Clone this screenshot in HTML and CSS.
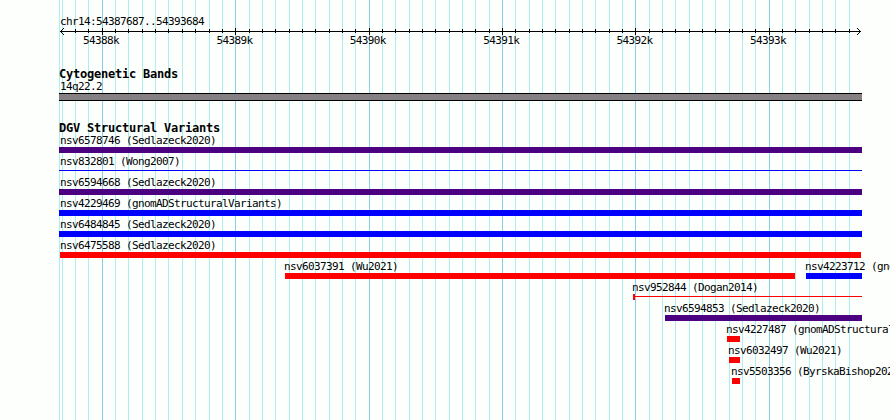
FILE: index.html
```html
<!DOCTYPE html>
<html lang="en">
<head>
    <meta charset="UTF-8">
    <meta name="viewport" content="width=device-width, initial-scale=1.0">
    <title>chr14:54387687..54393684</title>
    <link rel="stylesheet" href="styles.css">
</head>
<body>
    <div class="browser">
        <svg class="grid" id="grid" width="890" height="420" shape-rendering="crispEdges"></svg>

        <div class="ruler">
            <div class="region">chr14:54387687..54393684</div>
            <svg class="axis" id="axis" width="803" height="7" shape-rendering="crispEdges">
                <path d="M1 3h801v1h-801z"/>
                <path d="M2 2h1v3h-1z M3 1h1v1h-1z M3 5h1v1h-1z M4 0h1v1h-1z M4 6h1v1h-1z"/>
                <path d="M800 2h1v3h-1z M799 1h1v1h-1z M799 5h1v1h-1z M798 0h1v1h-1z M798 6h1v1h-1z"/>
            </svg>
            <div class="scale">
                <span>54388k</span>
                <span>54389k</span>
                <span>54390k</span>
                <span>54391k</span>
                <span>54392k</span>
                <span>54393k</span>
            </div>
        </div>

        <div class="track cytobands">
            <h2>Cytogenetic Bands</h2>
            <div class="label">14q22.2</div>
            <div class="band"></div>
        </div>

        <div class="track variants">
            <h2>DGV Structural Variants</h2>
            <div id="rows"></div>
        </div>
    </div>

    <script>
        const svgNS = 'http://www.w3.org/2000/svg';
        const trackLeft = 59;

        function addRect(parent, x, y, width, height, cls) {
            const rect = document.createElementNS(svgNS, 'rect');
            rect.setAttribute('x', x);
            rect.setAttribute('y', y);
            rect.setAttribute('width', width);
            rect.setAttribute('height', height);
            rect.setAttribute('class', cls);
            parent.appendChild(rect);
        }

        // one line every 100 bp, a darker one every 1000 bp
        const grid = document.getElementById('grid');
        const axis = document.getElementById('axis');
        addRect(grid, trackLeft, 0, 1, 420, 'minor');
        for (let k = -3; k <= 56; k++) {
            const x = Math.floor(102.3 + k * 13.338);
            const major = k % 10 === 0;
            addRect(grid, x, 0, 1, 420, major ? 'major' : 'minor');
            // the first line falls on the arrow head
            if (k > -3) addRect(axis, x - trackLeft, major ? 0 : 1, 1, major ? 7 : 4, 'tick');
        }

        // start and end are pixels from the left of the track
        const rows = [
            [{ name: 'nsv6578746 (Sedlazeck2020)', start: 0, end: 803, type: 'complex' }],
            [{ name: 'nsv832801 (Wong2007)', start: 0, end: 803, type: 'thin-gain' }],
            [{ name: 'nsv6594668 (Sedlazeck2020)', start: 0, end: 803, type: 'complex' }],
            [{ name: 'nsv4229469 (gnomADStructuralVariants)', start: 0, end: 803, type: 'gain' }],
            [{ name: 'nsv6484845 (Sedlazeck2020)', start: 0, end: 803, type: 'gain' }],
            [{ name: 'nsv6475588 (Sedlazeck2020)', start: 1, end: 802, type: 'loss' }],
            [{ name: 'nsv6037391 (Wu2021)', start: 226, end: 736, type: 'loss' },
             { name: 'nsv4223712 (gnomADStructuralVariants)', start: 747, end: 803, type: 'gain' }],
            [{ name: 'nsv952844 (Dogan2014)', start: 574, end: 803, type: 'thin-loss' }],
            [{ name: 'nsv6594853 (Sedlazeck2020)', start: 606, end: 803, type: 'complex' }],
            [{ name: 'nsv4227487 (gnomADStructuralVariants)', start: 668, end: 681, type: 'loss' }],
            [{ name: 'nsv6032497 (Wu2021)', start: 670, end: 681, type: 'loss' }],
            [{ name: 'nsv5503356 (ByrskaBishop2021)', start: 673, end: 681, type: 'loss' }]
        ];

        const rowsDiv = document.getElementById('rows');
        rows.forEach(features => {
            const row = document.createElement('div');
            row.className = 'row';
            let cursor = 0;
            features.forEach(f => {
                const feature = document.createElement('div');
                feature.className = 'feature' + (f.start === 0 ? ' clipped' : f.start > 1 ? ' inside' : '');
                feature.style.marginLeft = (f.start - cursor) + 'px';
                feature.style.width = (f.end - f.start) + 'px';
                const label = document.createElement('div');
                label.className = 'label';
                label.textContent = f.name;
                const bar = document.createElement('div');
                bar.className = 'bar ' + f.type;
                feature.append(label, bar);
                row.appendChild(feature);
                cursor = f.end;
            });
            rowsDiv.appendChild(row);
        });
    </script>
</body>
</html>
```
FILE: styles.css
```css
body {
    margin: 0;
    background: #fdfffd;
    color: #000;
    font-family: "DejaVu Sans Mono", monospace;
    font-size: 11px;
    letter-spacing: -0.622px;
    overflow: hidden;
}

.browser {
    position: relative;
    box-sizing: border-box;
    width: 890px;
    height: 420px;
    padding: 15px 0 0 59px;
    overflow: hidden;
}

.grid {
    position: absolute;
    left: 0;
    top: 0;
    z-index: -1;
}

.minor {
    fill: #afeeee;
}

.major {
    fill: #87ceeb;
}

.ruler {
    height: 53px;
}

.region {
    height: 13px;
    line-height: 13px;
    padding-left: 1px;
}

.axis {
    display: block;
}

.scale {
    display: flex;
    gap: 97.4px;
    padding-left: 24px;
    line-height: 11px;
}

.scale span {
    width: 36px;
    white-space: nowrap;
}

h2 {
    margin: 0;
    height: 13px;
    line-height: 13px;
    font-size: 12px;
    font-weight: bold;
    letter-spacing: -0.224px;
}

.label {
    height: 12px;
    line-height: 12px;
    white-space: nowrap;
}

.cytobands {
    height: 54px;
}

.cytobands .label,
.clipped .label {
    margin-left: 1px;
}

.inside .label {
    margin-left: -1px;
}

.band {
    box-sizing: border-box;
    width: 803px;
    height: 8px;
    background: #848084;
    border-top: 1px solid #000;
    border-bottom: 1px solid #000;
}

.row {
    display: flex;
    height: 21px;
}

.feature {
    flex: none;
}

.bar {
    height: 6px;
}

.gain {
    background: #0000ff;
}

.loss {
    background: #ff0000;
}

.complex {
    background: #4b0082;
}

.thin-gain {
    background: linear-gradient(#0000ff, #0000ff) 0 2px / 100% 1px no-repeat;
}

.thin-loss {
    box-sizing: border-box;
    background: linear-gradient(#ff0000, #ff0000) 0 2px / 100% 1px no-repeat;
    border-left: 2px solid #ff0000;
}
```
